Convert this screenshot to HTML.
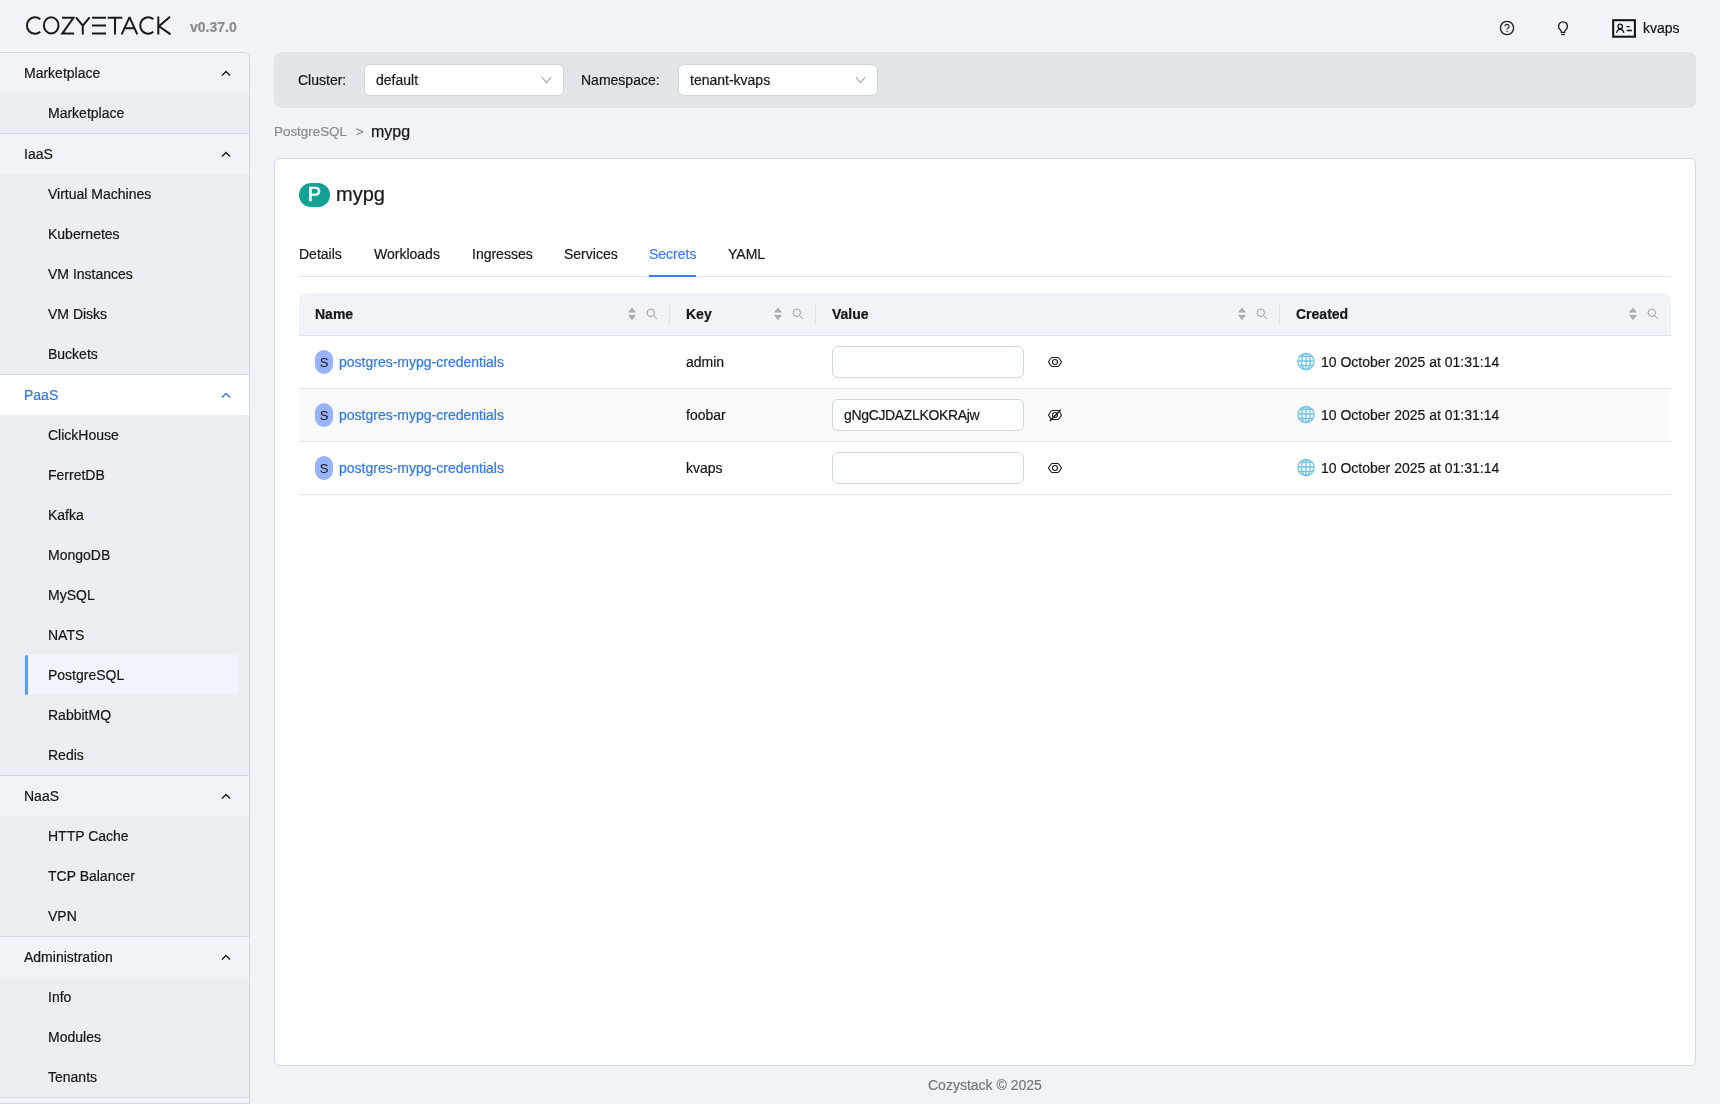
<!DOCTYPE html>
<html><head><meta charset="utf-8"><style>
*{box-sizing:border-box;margin:0;padding:0}
html,body{width:1720px;height:1104px;overflow:hidden}
body{will-change:transform;background:#f0f3f8;font-family:"Liberation Sans",sans-serif;font-size:14px;color:#161616;position:relative;-webkit-text-stroke:0.2px}
.abs{position:absolute}
.t{position:absolute;white-space:nowrap;line-height:20px}
#sb{position:absolute;left:-1px;top:52px;width:251px;height:1052px;border:1px solid #cfd8e4;border-top-right-radius:6px;background:#f0f4f8;overflow:hidden}
.gh{position:relative;height:40px;line-height:40px;padding-left:24px;background:#f0f4f8;color:#161616;white-space:nowrap}
.gh svg{position:absolute;left:221px;top:17px}
.gi{background:#ebeef3;border-bottom:1px solid #cfd8e4}
.it{position:relative;height:40px;line-height:40px;padding-left:48px;white-space:nowrap}
.it.act{background:#eff4fd;margin-left:28px;margin-right:10px;padding-left:20px}
.it.act::before{content:"";position:absolute;left:-3px;top:0;width:3px;height:40px;border-radius:2px;background:#5aa0fa}
.gh.blue{background:#fff;color:#2f78e9}
#bar{position:absolute;left:274px;top:52px;width:1422px;height:56px;border-radius:8px;background:#e1e4e9}
.sel{position:absolute;top:64px;height:32px;background:#fff;border:1px solid #cbd5e2;border-radius:6px;line-height:30px;padding-left:11px;white-space:nowrap}
.sel svg{position:absolute;right:11px;top:11px}
#card{position:absolute;left:274px;top:158px;width:1422px;height:908px;background:#fff;border:1px solid #cfd8e4;border-radius:6px}
.tab{position:absolute;top:244px;line-height:20px;white-space:nowrap}
#tabline{position:absolute;left:299px;top:276px;width:1372px;height:1px;background:#dfe6ef}
#thead{position:absolute;left:299px;top:293px;width:1372px;height:43px;background:#f0f3f8;border-top-left-radius:8px;border-top-right-radius:8px;border-bottom:1px solid #dde4ee}
.th{position:absolute;top:304px;line-height:20px;font-weight:bold;white-space:nowrap}
.cdiv{position:absolute;top:303px;width:1px;height:22px;background:#dfe4ec}
.row{position:absolute;left:299px;width:1372px;height:53px;border-bottom:1px solid #dde4ee}
.inp{position:absolute;left:832px;width:192px;height:32px;border:1px solid #cdd7e4;border-radius:6px;background:#fff;line-height:30px;padding-left:11px;white-space:nowrap}
.badge{position:absolute;left:315px;width:18px;height:24px;border-radius:9px;background:#97b3fa;text-align:center;line-height:25px;font-size:13px;color:#111;-webkit-text-stroke:0}
.link{position:absolute;left:339px;line-height:20px;color:#2f78e9;white-space:nowrap}
</style></head><body>
<svg class="abs" style="left:0;top:0" width="250" height="50" viewBox="0 0 250 50">
<g fill="none" stroke="#1a1a1a" stroke-width="2">
<path d="M40.3 19.2 A8.1 8.3 0 1 0 40.3 31.8"/>
<ellipse cx="51.2" cy="25.4" rx="7.3" ry="8.2"/>
<path d="M62 17.8 H73.4 L62.3 33.6 H74.2"/>
<path d="M76 17.3 L82.8 25.6 L89.6 17.3 M82.8 25.6 V34.4"/>
<path d="M92 17.8 H106 M92 25.6 H106 M92 33.6 H106"/>
<path d="M107.7 17.8 H122.3 M115 17.8 V34.4"/>
<path d="M121.7 34.4 L129.5 17.2 L137.3 34.4 M124.6 28.3 H134.4" stroke-linejoin="bevel"/>
<path d="M153.3 19.2 A7.9 8.3 0 1 0 153.3 31.8"/>
<path d="M158.3 16.5 V34.4 M170 16.8 L159 26.2 L170.5 34.4"/>
</g></svg>
<div class="t" style="left:190px;top:17px;font-weight:bold;color:#8a8a8a">v0.37.0</div>

<svg class="abs" style="left:1499px;top:20px" width="16" height="16" viewBox="0 0 16 16">
<circle cx="8" cy="8" r="6.6" fill="none" stroke="#1c1c1c" stroke-width="1.3"/>
<path d="M6 6.4 A2 2 0 1 1 8.6 8.2 C8.1 8.4 8 8.8 8 9.6" fill="none" stroke="#1c1c1c" stroke-width="1.2"/>
<rect x="7.4" y="10.7" width="1.2" height="1.2" fill="#1c1c1c"/>
</svg>
<svg class="abs" style="left:1555px;top:18px" width="16" height="20" viewBox="0 0 16 20">
<path d="M6.2 14.3 V13.1 C6.2 12.6 5.9 12.3 5.3 11.8 A4.45 4.45 0 1 1 10.7 11.8 C10.1 12.3 9.8 12.6 9.8 13.1 V14.3 Z" fill="none" stroke="#1c1c1c" stroke-width="1.3" stroke-linejoin="round"/>
<path d="M6.2 16.5 H9.8" stroke="#1c1c1c" stroke-width="1.3"/>
</svg>
<svg class="abs" style="left:1611px;top:18px" width="26" height="21" viewBox="0 0 26 21">
<rect x="2.2" y="2.2" width="21.7" height="16.5" fill="none" stroke="#111" stroke-width="2"/>
<circle cx="9.2" cy="8.4" r="2.2" fill="none" stroke="#111" stroke-width="1.3"/>
<path d="M5.6 14.8 C6 12.4 7.4 11.4 9.2 11.4 C11 11.4 12.4 12.4 12.8 14.8" fill="none" stroke="#111" stroke-width="1.3"/>
<path d="M15.7 8.6 H18.7 M15.7 12.5 H20.9" stroke="#111" stroke-width="1.3"/>
</svg>
<div class="t" style="left:1643px;top:18px">kvaps</div>

<div id="sb"><div class="gh">Marketplace<svg width="10" height="7" viewBox="0 0 10 7"><path d="M1 5.6 L5 1.6 L9 5.6" fill="none" stroke="#161616" stroke-width="1.4"/></svg></div><div class="gi"><div class="it">Marketplace</div></div><div class="gh">IaaS<svg width="10" height="7" viewBox="0 0 10 7"><path d="M1 5.6 L5 1.6 L9 5.6" fill="none" stroke="#161616" stroke-width="1.4"/></svg></div><div class="gi"><div class="it">Virtual Machines</div><div class="it">Kubernetes</div><div class="it">VM Instances</div><div class="it">VM Disks</div><div class="it">Buckets</div></div><div class="gh blue">PaaS<svg width="10" height="7" viewBox="0 0 10 7"><path d="M1 5.6 L5 1.6 L9 5.6" fill="none" stroke="#2f78e9" stroke-width="1.4"/></svg></div><div class="gi"><div class="it">ClickHouse</div><div class="it">FerretDB</div><div class="it">Kafka</div><div class="it">MongoDB</div><div class="it">MySQL</div><div class="it">NATS</div><div class="it act">PostgreSQL</div><div class="it">RabbitMQ</div><div class="it">Redis</div></div><div class="gh">NaaS<svg width="10" height="7" viewBox="0 0 10 7"><path d="M1 5.6 L5 1.6 L9 5.6" fill="none" stroke="#161616" stroke-width="1.4"/></svg></div><div class="gi"><div class="it">HTTP Cache</div><div class="it">TCP Balancer</div><div class="it">VPN</div></div><div class="gh">Administration<svg width="10" height="7" viewBox="0 0 10 7"><path d="M1 5.6 L5 1.6 L9 5.6" fill="none" stroke="#161616" stroke-width="1.4"/></svg></div><div class="gi"><div class="it">Info</div><div class="it">Modules</div><div class="it">Tenants</div></div><div style="height:5px;background:#f0f4f8"></div></div>
<div id="bar"></div>
<div class="t" style="left:298px;top:70px">Cluster:</div>
<div class="sel" style="left:364px;width:200px">default<svg width="11" height="8" viewBox="0 0 11 8"><path d="M0.8 1 L5.5 6.6 L10.2 1" fill="none" stroke="#a0a0a0" stroke-width="1.1"/></svg></div>
<div class="t" style="left:581px;top:70px">Namespace:</div>
<div class="sel" style="left:678px;width:200px">tenant-kvaps<svg width="11" height="8" viewBox="0 0 11 8"><path d="M0.8 1 L5.5 6.6 L10.2 1" fill="none" stroke="#a0a0a0" stroke-width="1.1"/></svg></div>
<div class="t" style="left:274px;top:122px;color:#8a8a8a;font-size:13.4px">PostgreSQL</div>
<div class="t" style="left:356px;top:122px;color:#8a8a8a;font-size:13px">&gt;</div>
<div class="t" style="left:371px;top:122px;font-size:16px;-webkit-text-stroke:0.25px #1c1c1c">mypg</div>

<div id="card"></div>
<div class="abs" style="left:299px;top:183px;width:31px;height:24px;border-radius:12px;background:#13a196;color:#fff;font-size:20px;-webkit-text-stroke:0.6px #fff;line-height:22px;text-align:center">P</div>
<div class="t" style="left:336px;top:182px;font-size:20px;line-height:24px">mypg</div>
<div class="tab" style="left:299px">Details</div>
<div class="tab" style="left:374px">Workloads</div>
<div class="tab" style="left:472px">Ingresses</div>
<div class="tab" style="left:564px">Services</div>
<div class="tab" style="left:649px;color:#3a7ff5">Secrets</div>
<div class="tab" style="left:728px">YAML</div>
<div id="tabline"></div>
<div class="abs" style="left:649px;top:275px;width:47px;height:2px;background:#3a7ff5"></div>

<div id="thead"></div><div class="th" style="left:315px">Name</div><svg class="abs" style="left:627px;top:306px" width="10" height="16" viewBox="0 0 10 16">
<path d="M1 6.6 L5 1.4 L9 6.6 Z M1 9 L9 9 L5 14.2 Z" fill="#a9acb0"/></svg><svg class="abs" style="left:646px;top:308px" width="12" height="12" viewBox="0 0 12 12">
<circle cx="4.8" cy="4.8" r="3.7" fill="none" stroke="#9a9a9a" stroke-width="1"/>
<path d="M7.5 7.5 L10.8 10.8" stroke="#9a9a9a" stroke-width="1"/></svg><div class="cdiv" style="left:669px"></div><div class="th" style="left:686px">Key</div><svg class="abs" style="left:773px;top:306px" width="10" height="16" viewBox="0 0 10 16">
<path d="M1 6.6 L5 1.4 L9 6.6 Z M1 9 L9 9 L5 14.2 Z" fill="#a9acb0"/></svg><svg class="abs" style="left:792px;top:308px" width="12" height="12" viewBox="0 0 12 12">
<circle cx="4.8" cy="4.8" r="3.7" fill="none" stroke="#9a9a9a" stroke-width="1"/>
<path d="M7.5 7.5 L10.8 10.8" stroke="#9a9a9a" stroke-width="1"/></svg><div class="cdiv" style="left:815px"></div><div class="th" style="left:832px">Value</div><svg class="abs" style="left:1237px;top:306px" width="10" height="16" viewBox="0 0 10 16">
<path d="M1 6.6 L5 1.4 L9 6.6 Z M1 9 L9 9 L5 14.2 Z" fill="#a9acb0"/></svg><svg class="abs" style="left:1256px;top:308px" width="12" height="12" viewBox="0 0 12 12">
<circle cx="4.8" cy="4.8" r="3.7" fill="none" stroke="#9a9a9a" stroke-width="1"/>
<path d="M7.5 7.5 L10.8 10.8" stroke="#9a9a9a" stroke-width="1"/></svg><div class="cdiv" style="left:1279px"></div><div class="th" style="left:1296px">Created</div><svg class="abs" style="left:1628px;top:306px" width="10" height="16" viewBox="0 0 10 16">
<path d="M1 6.6 L5 1.4 L9 6.6 Z M1 9 L9 9 L5 14.2 Z" fill="#a9acb0"/></svg><svg class="abs" style="left:1647px;top:308px" width="12" height="12" viewBox="0 0 12 12">
<circle cx="4.8" cy="4.8" r="3.7" fill="none" stroke="#9a9a9a" stroke-width="1"/>
<path d="M7.5 7.5 L10.8 10.8" stroke="#9a9a9a" stroke-width="1"/></svg><div class="row" style="top:336px;background:#fff"></div><div class="badge" style="top:350px">S</div><div class="link" style="top:352px">postgres-mypg-credentials</div><div class="t" style="left:686px;top:352px">admin</div><div class="inp" style="top:346px;letter-spacing:-0.35px"></div><svg class="abs" style="left:1047px;top:355px" width="16" height="14" viewBox="0 0 16 14">
<path d="M1.5 7 C2.8 4.6 4.2 2.6 5.4 2.5 H10.6 C11.8 2.6 13.2 4.6 14.5 7 C13.2 9.4 11.8 11.4 10.6 11.5 H5.4 C4.2 11.4 2.8 9.4 1.5 7 Z" fill="none" stroke="#1c1c1c" stroke-width="1.1"/>
<circle cx="8" cy="7" r="2.5" fill="none" stroke="#1c1c1c" stroke-width="1.1"/></svg><svg class="abs" style="left:1296px;top:352px" width="20" height="20" viewBox="0 0 20 20">
<g stroke="#72c2e6" stroke-width="1.3" fill="none">
<circle cx="10" cy="9.5" r="8.1"/>
<path d="M10 1.4 V17.6 M3.6 4.4 H16.4 M1.9 9 H18.1 M2.8 13.5 H17.2"/>
<ellipse cx="10" cy="9.5" rx="4.4" ry="8.1"/></g></svg><div class="t" style="left:1321px;top:352px">10 October 2025 at 01:31:14</div><div class="row" style="top:389px;background:#fafafa"></div><div class="badge" style="top:403px">S</div><div class="link" style="top:405px">postgres-mypg-credentials</div><div class="t" style="left:686px;top:405px">foobar</div><div class="inp" style="top:399px;letter-spacing:-0.35px">gNgCJDAZLKOKRAjw</div><svg class="abs" style="left:1047px;top:408px" width="16" height="14" viewBox="0 0 16 14">
<path d="M1.5 7 C2.8 4.6 4.2 2.6 5.4 2.5 H10.6 C11.8 2.6 13.2 4.6 14.5 7 C13.2 9.4 11.8 11.4 10.6 11.5 H5.4 C4.2 11.4 2.8 9.4 1.5 7 Z" fill="none" stroke="#1c1c1c" stroke-width="1.1"/>
<circle cx="8" cy="7" r="2.5" fill="none" stroke="#1c1c1c" stroke-width="1.1"/><path d="M2.8 13 L13.8 1.8" stroke="#1c1c1c" stroke-width="1.3"/></svg><svg class="abs" style="left:1296px;top:405px" width="20" height="20" viewBox="0 0 20 20">
<g stroke="#72c2e6" stroke-width="1.3" fill="none">
<circle cx="10" cy="9.5" r="8.1"/>
<path d="M10 1.4 V17.6 M3.6 4.4 H16.4 M1.9 9 H18.1 M2.8 13.5 H17.2"/>
<ellipse cx="10" cy="9.5" rx="4.4" ry="8.1"/></g></svg><div class="t" style="left:1321px;top:405px">10 October 2025 at 01:31:14</div><div class="row" style="top:442px;background:#fff"></div><div class="badge" style="top:456px">S</div><div class="link" style="top:458px">postgres-mypg-credentials</div><div class="t" style="left:686px;top:458px">kvaps</div><div class="inp" style="top:452px;letter-spacing:-0.35px"></div><svg class="abs" style="left:1047px;top:461px" width="16" height="14" viewBox="0 0 16 14">
<path d="M1.5 7 C2.8 4.6 4.2 2.6 5.4 2.5 H10.6 C11.8 2.6 13.2 4.6 14.5 7 C13.2 9.4 11.8 11.4 10.6 11.5 H5.4 C4.2 11.4 2.8 9.4 1.5 7 Z" fill="none" stroke="#1c1c1c" stroke-width="1.1"/>
<circle cx="8" cy="7" r="2.5" fill="none" stroke="#1c1c1c" stroke-width="1.1"/></svg><svg class="abs" style="left:1296px;top:458px" width="20" height="20" viewBox="0 0 20 20">
<g stroke="#72c2e6" stroke-width="1.3" fill="none">
<circle cx="10" cy="9.5" r="8.1"/>
<path d="M10 1.4 V17.6 M3.6 4.4 H16.4 M1.9 9 H18.1 M2.8 13.5 H17.2"/>
<ellipse cx="10" cy="9.5" rx="4.4" ry="8.1"/></g></svg><div class="t" style="left:1321px;top:458px">10 October 2025 at 01:31:14</div>
<div class="t" style="left:928px;top:1075px;color:#777">Cozystack © 2025</div>
</body></html>
